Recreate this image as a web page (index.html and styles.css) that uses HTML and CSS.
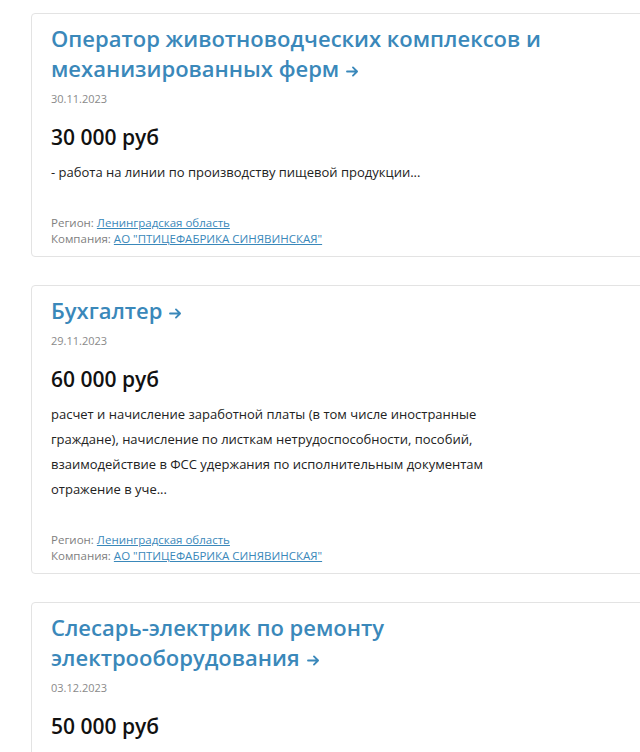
FILE: index.html
```html
<!DOCTYPE html>
<html lang="ru">
<head>
<meta charset="utf-8">
<title>Вакансии</title>
<link rel="stylesheet" href="styles.css">
</head>
<body>
<div class="list">
  <article class="card">
    <h2 class="card-title"><a href="#">Оператор животноводческих комплексов и механизированных ферм<svg class="arrow" viewBox="0 0 14 12" aria-hidden="true"><path d="M1 6h11M7.5 1.5 12 6l-4.5 4.5"/></svg></a></h2>
    <div class="card-date">30.11.2023</div>
    <div class="card-price">30 000 руб</div>
    <p class="card-desc">- работа на линии по производству пищевой продукции...</p>
    <div class="card-meta">
      <div>Регион: <a href="#">Ленинградская область</a></div>
      <div>Компания: <a href="#">АО "ПТИЦЕФАБРИКА СИНЯВИНСКАЯ"</a></div>
    </div>
  </article>
  <article class="card">
    <h2 class="card-title"><a href="#">Бухгалтер<svg class="arrow" viewBox="0 0 14 12" aria-hidden="true"><path d="M1 6h11M7.5 1.5 12 6l-4.5 4.5"/></svg></a></h2>
    <div class="card-date">29.11.2023</div>
    <div class="card-price">60 000 руб</div>
    <p class="card-desc">расчет и начисление заработной платы (в том числе иностранные граждане), начисление по листкам нетрудоспособности, пособий, взаимодействие в ФСС удержания по исполнительным документам отражение в уче...</p>
    <div class="card-meta">
      <div>Регион: <a href="#">Ленинградская область</a></div>
      <div>Компания: <a href="#">АО "ПТИЦЕФАБРИКА СИНЯВИНСКАЯ"</a></div>
    </div>
  </article>
  <article class="card">
    <h2 class="card-title"><a href="#">Слесарь-электрик по ремонту электрооборудования<svg class="arrow" viewBox="0 0 14 12" aria-hidden="true"><path d="M1 6h11M7.5 1.5 12 6l-4.5 4.5"/></svg></a></h2>
    <div class="card-date">03.12.2023</div>
    <div class="card-price">50 000 руб</div>
    <p class="card-desc">- обслуживание и ремонт электрооборудования предприятия...</p>
    <div class="card-meta">
      <div>Регион: <a href="#">Ленинградская область</a></div>
      <div>Компания: <a href="#">АО "ПТИЦЕФАБРИКА СИНЯВИНСКАЯ"</a></div>
    </div>
  </article>
</div>
</body>
</html>
```

FILE: styles.css
```css
html, body {
  margin: 0;
  padding: 0;
  background: #fff;
  overflow: hidden;
}

body {
  font-family: "Open Sans", "Noto Sans", sans-serif;
  color: #222;
}

.list {
  display: flex;
  flex-direction: column;
  gap: 28px;
  padding: 13px 0 0 31px;
}

.card {
  margin-right: -20px;
  border: 1px solid #e3e3e3;
  border-radius: 4px;
  padding: 9px 19px 9px 19px;
}

.card-title {
  margin: 0;
  font-size: 22px;
  font-weight: 600;
  line-height: 30px;
  max-width: 560px;
}

.card-title a {
  color: #3a88ba;
  text-decoration: none;
}

/* trailing arrow after the vacancy title */
.arrow {
  display: inline-block;
  width: 13px;
  height: 11px;
  margin-left: 7px;
  vertical-align: 0;
  fill: none;
  stroke: currentColor;
  stroke-width: 2;
  stroke-linecap: round;
  stroke-linejoin: round;
}

.card-date {
  margin-top: 7px;
  font-size: 11px;
  line-height: 18px;
  color: #8a8a8a;
}

.card-price {
  margin-top: 14px;
  font-size: 21px;
  font-weight: 600;
  line-height: 30px;
  color: #111;
}

.card-desc {
  margin: 8px 0 0;
  max-width: 460px;
  font-size: 13px;
  line-height: 25px;
  color: #222;
}

.card-meta {
  margin-top: 30px;
  font-size: 11.5px;
  line-height: 16px;
  color: #808080;
}

.card-meta a {
  color: #3a88ba;
  text-decoration: underline;
}
```
